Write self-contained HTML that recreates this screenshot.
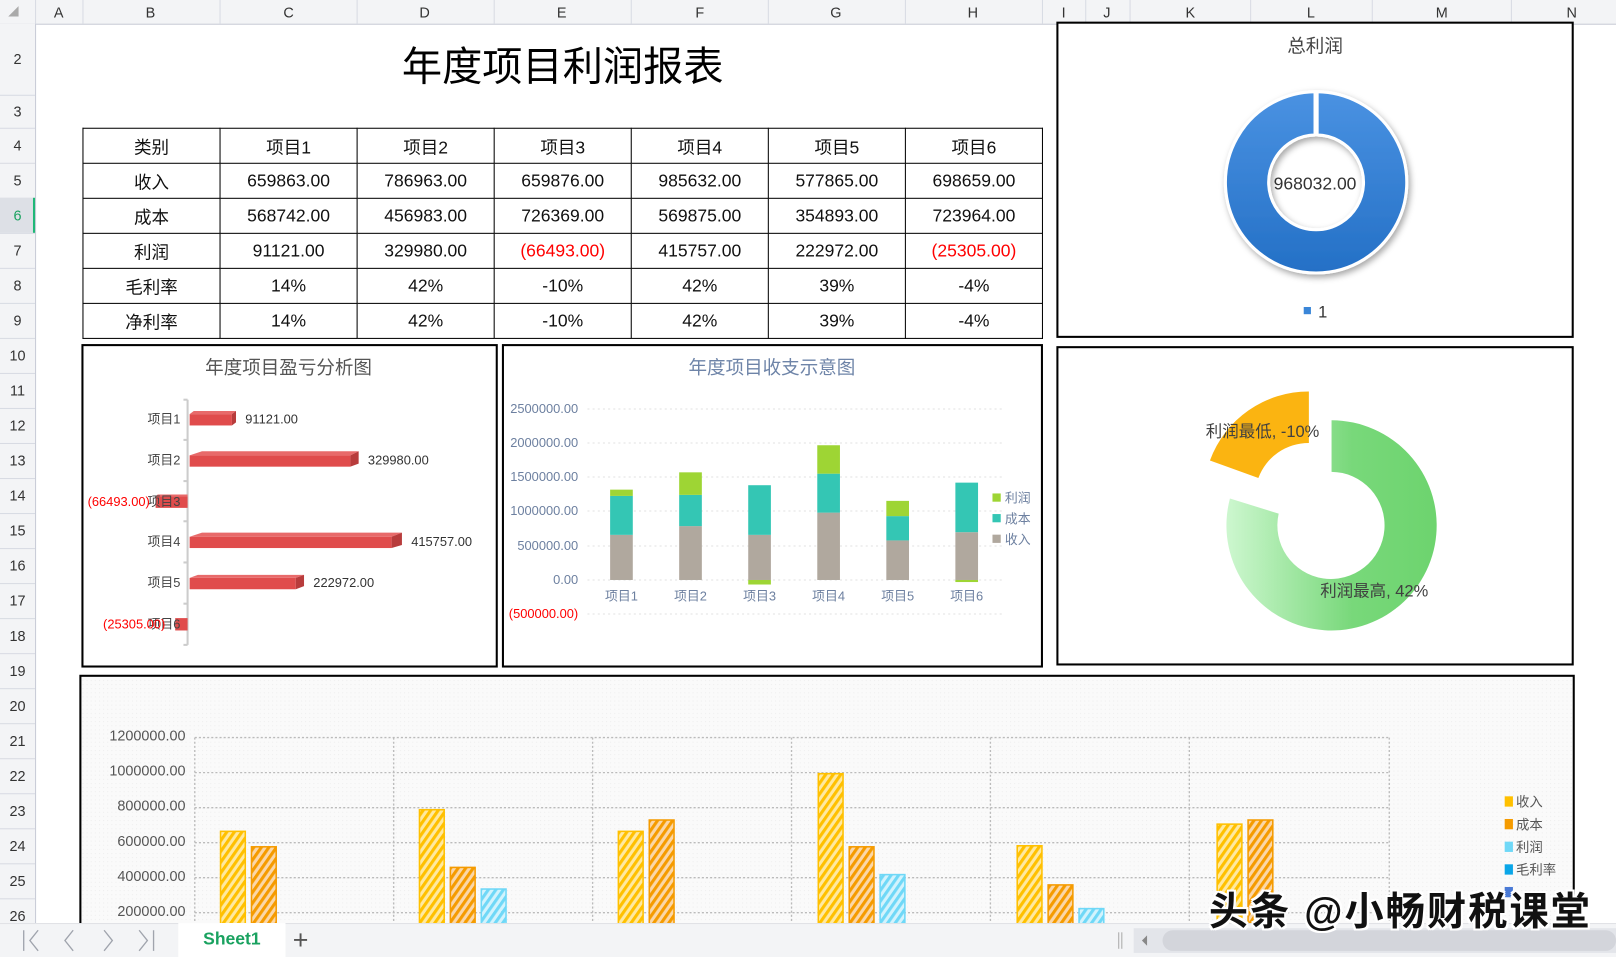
<!DOCTYPE html>
<html><head><meta charset="utf-8"><style>
html,body{margin:0;padding:0;width:1616px;height:956px;overflow:hidden;background:#fff}
#w{position:absolute;left:0;top:0;width:1568px;height:928px;transform:scale(1.03061,1.03017);transform-origin:0 0;font-family:"Liberation Sans","Noto Sans CJK SC",sans-serif}
.ch{position:absolute;top:0;height:23px;background:#f3f4f6;border-bottom:1px solid #c8cbd6;left:0;width:1568px}
.ch span{position:absolute;top:4px;font-size:14px;color:#333;transform:translateX(-50%)}
.ch i{position:absolute;top:0;width:1px;height:23px;background:#d8dbe3}
.rh{position:absolute;left:0;top:23px;width:34px;height:873px;background:#f3f4f6;border-right:1px solid #c8cbd6}
.rh span{position:absolute;left:0;width:34px;text-align:center;font-size:14px;color:#333;transform:translateY(-50%)}
.rh i{position:absolute;left:0;width:34px;height:1px;background:#d8dbe3}
table{position:absolute;left:80px;top:124px;border-collapse:collapse}
td{border:1px solid #000;width:132px;height:33px;padding:0;text-align:center;font-size:17px;color:#111}
.r{color:#f00}
.tab{position:absolute;left:0;top:896px;width:1568px;height:32px;background:#f3f4f6;border-top:1px solid #e0e2e6}
</style></head><body><div id="w">
<div class="ch">
<i style="left:34px"></i><i style="left:80px"></i><i style="left:213px"></i><i style="left:346px"></i><i style="left:479px"></i><i style="left:612px"></i><i style="left:745px"></i><i style="left:878px"></i><i style="left:1011px"></i><i style="left:1053px"></i><i style="left:1096px"></i><i style="left:1213px"></i><i style="left:1331px"></i><i style="left:1466px"></i>
<span style="left:57px">A</span><span style="left:146px">B</span><span style="left:280px">C</span><span style="left:412px">D</span><span style="left:545px">E</span><span style="left:679px">F</span><span style="left:811px">G</span><span style="left:944px">H</span><span style="left:1032px">I</span><span style="left:1074px">J</span><span style="left:1155px">K</span><span style="left:1272px">L</span><span style="left:1399px">M</span><span style="left:1525px">N</span>
</div>
<div style="position:absolute;left:8px;top:6px;width:0;height:0;border-left:10px solid transparent;border-bottom:10px solid #aaa"></div>
<div class="rh">
<i style="top:69px"></i><i style="top:101px"></i><i style="top:135px"></i><i style="top:169px"></i><i style="top:203px"></i><i style="top:237px"></i><i style="top:271px"></i><i style="top:305px"></i><i style="top:339px"></i><i style="top:373px"></i><i style="top:407px"></i><i style="top:441px"></i><i style="top:475px"></i><i style="top:509px"></i><i style="top:543px"></i><i style="top:577px"></i><i style="top:611px"></i><i style="top:645px"></i><i style="top:679px"></i><i style="top:713px"></i><i style="top:747px"></i><i style="top:781px"></i><i style="top:815px"></i><i style="top:849px"></i>
<div style="position:absolute;left:0;top:169px;width:32px;height:34px;background:#dde0e6;border-right:2px solid #1fb877"></div>
<span style="top:34px">2</span><span style="top:85px">3</span><span style="top:118px">4</span><span style="top:152px">5</span><span style="top:186px;color:#1aa260">6</span><span style="top:220px">7</span><span style="top:254px">8</span><span style="top:288px">9</span><span style="top:322px">10</span><span style="top:356px">11</span><span style="top:390px">12</span><span style="top:424px">13</span><span style="top:458px">14</span><span style="top:492px">15</span><span style="top:526px">16</span><span style="top:560px">17</span><span style="top:594px">18</span><span style="top:628px">19</span><span style="top:662px">20</span><span style="top:696px">21</span><span style="top:730px">22</span><span style="top:764px">23</span><span style="top:798px">24</span><span style="top:832px">25</span><span style="top:866px">26</span>
</div>
<div style="position:absolute;left:300px;top:34px;width:492px;text-align:center;font-size:39px;color:#000">年度项目利润报表</div>
<table>
<tr><td>类别</td><td>项目1</td><td>项目2</td><td>项目3</td><td>项目4</td><td>项目5</td><td>项目6</td></tr>
<tr><td>收入</td><td>659863.00</td><td>786963.00</td><td>659876.00</td><td>985632.00</td><td>577865.00</td><td>698659.00</td></tr>
<tr><td>成本</td><td>568742.00</td><td>456983.00</td><td>726369.00</td><td>569875.00</td><td>354893.00</td><td>723964.00</td></tr>
<tr><td>利润</td><td>91121.00</td><td>329980.00</td><td class="r">(66493.00)</td><td>415757.00</td><td>222972.00</td><td class="r">(25305.00)</td></tr>
<tr><td>毛利率</td><td>14%</td><td>42%</td><td>-10%</td><td>42%</td><td>39%</td><td>-4%</td></tr>
<tr><td>净利率</td><td>14%</td><td>42%</td><td>-10%</td><td>42%</td><td>39%</td><td>-4%</td></tr>
</table>
<svg style="position:absolute;left:0;top:0" width="1568" height="928" font-family="Liberation Sans,Noto Sans CJK SC,sans-serif">
<defs>
<linearGradient id="bl" x1="0" y1="0" x2="0" y2="1"><stop offset="0" stop-color="#4a92e2"/><stop offset="1" stop-color="#2470c6"/></linearGradient>
<linearGradient id="gr" x1="0" y1="0" x2="1" y2="0"><stop offset="0" stop-color="#cdf7cf"/><stop offset="0.6" stop-color="#78d87a"/><stop offset="1" stop-color="#6dd46e"/></linearGradient>
<filter id="sh" x="-20%" y="-20%" width="140%" height="140%"><feDropShadow dx="2" dy="3" stdDeviation="3" flood-color="#000" flood-opacity="0.35"/></filter>
<pattern id="pY" width="6" height="6" patternUnits="userSpaceOnUse" patternTransform="rotate(35)"><rect width="6" height="6" fill="#ffe9a0"/><rect width="3" height="6" fill="#ffc000"/></pattern>
<pattern id="pO" width="6" height="6" patternUnits="userSpaceOnUse" patternTransform="rotate(35)"><rect width="6" height="6" fill="#fbd7a8"/><rect width="3" height="6" fill="#f59b00"/></pattern>
<pattern id="pB" width="6" height="6" patternUnits="userSpaceOnUse" patternTransform="rotate(35)"><rect width="6" height="6" fill="#d2f3fd"/><rect width="3" height="6" fill="#6fd8f7"/></pattern>
<pattern id="bg" width="4" height="4" patternUnits="userSpaceOnUse"><rect width="4" height="4" fill="#fafafa"/><rect width="1" height="1" fill="#eeeeee"/></pattern>
</defs>
<rect x="1026" y="22" width="500" height="305" fill="#fff" stroke="#000" stroke-width="2"/>
<text x="1276" y="51" font-size="18" fill="#444" text-anchor="middle">总利润</text>
<g filter="url(#sh)"><path d="M1278 89 A88 88 0 1 1 1276 89 L1276 131 A46 46 0 1 0 1278 131 Z" fill="url(#bl)" stroke="#fff" stroke-width="3"/></g>
<text x="1276" y="184" font-size="17" fill="#333" text-anchor="middle">968032.00</text>
<rect x="1265" y="298" width="7" height="7" fill="#3a86d8"/>
<text x="1279" y="308" font-size="16" fill="#333">1</text>
<rect x="80" y="335" width="402" height="312" fill="#fff" stroke="#000" stroke-width="2"/>
<text x="280" y="363" font-size="18" fill="#555" text-anchor="middle">年度项目盈亏分析图</text>
<line x1="182" y1="388" x2="182" y2="626" stroke="#ccc" stroke-width="2"/>
<g stroke="#ccc" stroke-width="2"><line x1="178" y1="388" x2="182" y2="388"/><line x1="178" y1="427" x2="182" y2="427"/><line x1="178" y1="467" x2="182" y2="467"/><line x1="178" y1="506" x2="182" y2="506"/><line x1="178" y1="546" x2="182" y2="546"/><line x1="178" y1="586" x2="182" y2="586"/><line x1="178" y1="626" x2="182" y2="626"/></g>
<g>
<rect x="184" y="402" width="41" height="11" fill="#e04c4c"/><polygon points="184,402 188,399 229,399 225,402" fill="#e86a6a"/><polygon points="225,402 229,399 229,410 225,413" fill="#b83c3c"/>
<rect x="184" y="442" width="156" height="11" fill="#e04c4c"/><polygon points="184,442 196,438 348,438 340,442" fill="#e86a6a"/><polygon points="340,442 348,438 348,450 340,453" fill="#b83c3c"/>
<rect x="151" y="482" width="31" height="11" fill="#e04c4c"/><polygon points="151,482 153,480 182,480 182,482" fill="#e86a6a"/>
<rect x="184" y="521" width="196" height="11" fill="#e04c4c"/><polygon points="184,521 196,517 390,517 380,521" fill="#e86a6a"/><polygon points="380,521 390,517 390,529 380,532" fill="#b83c3c"/>
<rect x="184" y="561" width="103" height="11" fill="#e04c4c"/><polygon points="184,561 192,558 295,558 287,561" fill="#e86a6a"/><polygon points="287,561 295,558 295,569 287,572" fill="#b83c3c"/>
<rect x="170" y="600" width="12" height="12" fill="#e04c4c"/>
</g>
<g font-size="12.5" fill="#444" text-anchor="end"><text x="175" y="411">项目1</text><text x="175" y="451">项目2</text><text x="175" y="491">项目3</text><text x="175" y="530">项目4</text><text x="175" y="570">项目5</text><text x="175" y="610">项目6</text></g>
<g font-size="12.5" fill="#333"><text x="238" y="411">91121.00</text><text x="357" y="451">329980.00</text><text x="399" y="530">415757.00</text><text x="304" y="570">222972.00</text></g>
<g font-size="12.5" fill="#f00"><text x="85" y="491">(66493.00)</text><text x="100" y="610">(25305.00)</text></g>
<rect x="488" y="335" width="523" height="312" fill="#fff" stroke="#000" stroke-width="2"/>
<text x="749" y="363" font-size="18" fill="#6e84a8" text-anchor="middle">年度项目收支示意图</text>
<g stroke="#e2e2e2" stroke-dasharray="2,3"><line x1="570" y1="397" x2="972" y2="397"/><line x1="570" y1="430" x2="972" y2="430"/><line x1="570" y1="463" x2="972" y2="463"/><line x1="570" y1="496" x2="972" y2="496"/><line x1="570" y1="530" x2="972" y2="530"/><line x1="570" y1="563" x2="972" y2="563"/><line x1="570" y1="596" x2="972" y2="596"/></g>
<g font-size="12.5" fill="#6d80a0" text-anchor="end"><text x="561" y="401">2500000.00</text><text x="561" y="434">2000000.00</text><text x="561" y="467">1500000.00</text><text x="561" y="500">1000000.00</text><text x="561" y="534">500000.00</text><text x="561" y="567">0.00</text><text x="561" y="600" fill="#f00">(500000.00)</text></g>
<g>
<rect x="592" y="519.2" width="22" height="43.8" fill="#b0a89e"/><rect x="592" y="481.4" width="22" height="37.8" fill="#34c6b4"/><rect x="592" y="475.3" width="22" height="6.1" fill="#9ed534"/>
<rect x="659" y="510.7" width="22" height="52.3" fill="#b0a89e"/><rect x="659" y="480.4" width="22" height="30.3" fill="#34c6b4"/><rect x="659" y="458.5" width="22" height="21.9" fill="#9ed534"/>
<rect x="726" y="519.2" width="22" height="43.8" fill="#b0a89e"/><rect x="726" y="471" width="22" height="48.2" fill="#34c6b4"/><rect x="726" y="563" width="22" height="4.4" fill="#9ed534"/>
<rect x="793" y="497.6" width="22" height="65.4" fill="#b0a89e"/><rect x="793" y="459.8" width="22" height="37.8" fill="#34c6b4"/><rect x="793" y="432.2" width="22" height="27.6" fill="#9ed534"/>
<rect x="860" y="524.6" width="22" height="38.4" fill="#b0a89e"/><rect x="860" y="501" width="22" height="23.6" fill="#34c6b4"/><rect x="860" y="486.2" width="22" height="14.8" fill="#9ed534"/>
<rect x="927" y="516.6" width="22" height="46.4" fill="#b0a89e"/><rect x="927" y="468.5" width="22" height="48.1" fill="#34c6b4"/><rect x="927" y="563" width="22" height="2" fill="#9ed534"/>
</g>
<g font-size="12.5" fill="#6d80a0" text-anchor="middle"><text x="603" y="583">项目1</text><text x="670" y="583">项目2</text><text x="737" y="583">项目3</text><text x="804" y="583">项目4</text><text x="871" y="583">项目5</text><text x="938" y="583">项目6</text></g>
<rect x="963" y="479" width="8" height="8" fill="#9ed534"/><rect x="963" y="499" width="8" height="8" fill="#34c6b4"/><rect x="963" y="519" width="8" height="8" fill="#b0a89e"/>
<g font-size="12.5" fill="#6d80a0"><text x="975" y="488">利润</text><text x="975" y="508">成本</text><text x="975" y="528">收入</text></g>
<rect x="1026" y="337" width="500" height="308" fill="#fff" stroke="#000" stroke-width="2"/>
<path d="M1292 408 A102 102 0 1 1 1193.4 483.9 L1240.7 498.6 A52 52 0 1 0 1292 458 Z" fill="url(#gr)"/>
<path d="M1270 380 L1270 430 A52 52 0 0 0 1221 464 L1174 447 A102 102 0 0 1 1270 380 Z" fill="#fbb411"/>
<g font-size="16" fill="#404040"><text x="1170" y="424">利润最低, -10%</text><text x="1281" y="579">利润最高, 42%</text></g>
<rect x="78" y="656" width="1449" height="260" fill="url(#bg)" stroke="#000" stroke-width="2"/>
<g stroke="#bbb" stroke-dasharray="2,2" stroke-width="1.3">
<line x1="189" y1="716" x2="1348" y2="716"/><line x1="189" y1="750" x2="1348" y2="750"/><line x1="189" y1="784" x2="1348" y2="784"/><line x1="189" y1="818" x2="1348" y2="818"/><line x1="189" y1="852" x2="1348" y2="852"/><line x1="189" y1="886" x2="1348" y2="886"/>
<line x1="189" y1="716" x2="189" y2="900"/><line x1="382" y1="716" x2="382" y2="900"/><line x1="575" y1="716" x2="575" y2="900"/><line x1="768" y1="716" x2="768" y2="900"/><line x1="961" y1="716" x2="961" y2="900"/><line x1="1154" y1="716" x2="1154" y2="900"/><line x1="1348" y1="716" x2="1348" y2="900"/>
</g>
<g font-size="14" fill="#555" text-anchor="end"><text x="180" y="719">1200000.00</text><text x="180" y="753">1000000.00</text><text x="180" y="787">800000.00</text><text x="180" y="821">600000.00</text><text x="180" y="855">400000.00</text><text x="180" y="889">200000.00</text></g>
<g stroke-width="1.5">
<rect x="214" y="807" width="24" height="111" fill="url(#pY)" stroke="#ffc000"/><rect x="244" y="822" width="24" height="96" fill="url(#pO)" stroke="#f59b00"/><rect x="274" y="903" width="24" height="15" fill="url(#pB)" stroke="#6fd8f7"/>
<rect x="407" y="786" width="24" height="132" fill="url(#pY)" stroke="#ffc000"/><rect x="437" y="842" width="24" height="76" fill="url(#pO)" stroke="#f59b00"/><rect x="467" y="863" width="24" height="55" fill="url(#pB)" stroke="#6fd8f7"/>
<rect x="600" y="807" width="24" height="111" fill="url(#pY)" stroke="#ffc000"/><rect x="630" y="796" width="24" height="122" fill="url(#pO)" stroke="#f59b00"/>
<rect x="794" y="751" width="24" height="167" fill="url(#pY)" stroke="#ffc000"/><rect x="824" y="822" width="24" height="96" fill="url(#pO)" stroke="#f59b00"/><rect x="854" y="849" width="24" height="69" fill="url(#pB)" stroke="#6fd8f7"/>
<rect x="987" y="821" width="24" height="97" fill="url(#pY)" stroke="#ffc000"/><rect x="1017" y="859" width="24" height="59" fill="url(#pO)" stroke="#f59b00"/><rect x="1047" y="882" width="24" height="36" fill="url(#pB)" stroke="#6fd8f7"/>
<rect x="1181" y="800" width="24" height="118" fill="url(#pY)" stroke="#ffc000"/><rect x="1211" y="796" width="24" height="122" fill="url(#pO)" stroke="#f59b00"/>
</g>
<rect x="1460" y="773" width="8" height="10" fill="#ffc000"/><rect x="1460" y="795" width="8" height="10" fill="#f59b00"/><rect x="1460" y="817" width="8" height="10" fill="#6fd8f7"/><rect x="1460" y="839" width="8" height="10" fill="#0aa6e8"/><rect x="1460" y="861" width="8" height="10" fill="#4a7ad6"/>
<g font-size="13" fill="#555"><text x="1471" y="783">收入</text><text x="1471" y="805">成本</text><text x="1471" y="827">利润</text><text x="1471" y="849">毛利率</text></g>
</svg>
<div class="tab">
<svg style="position:absolute;left:0;top:0" width="170" height="32" fill="none" stroke="#a0a4ad" stroke-width="1.3">
<line x1="23" y1="6" x2="23" y2="26"/><polyline points="37,6 29,16 37,26"/>
<polyline points="71,6 63,16 71,26"/>
<polyline points="101,6 109,16 101,26"/>
<polyline points="135,6 143,16 135,26"/><line x1="149" y1="6" x2="149" y2="26"/>
</svg>
<div style="position:absolute;left:173px;top:-1px;width:104px;height:33px;background:#fff;text-align:center;line-height:32px;font-size:17px;font-weight:bold;color:#1aa260">Sheet1</div>
<div style="position:absolute;left:284px;top:0px;font-size:26px;color:#555;line-height:30px">+</div>
<div style="position:absolute;left:1085px;top:8px;width:1px;height:16px;background:#aaa;box-shadow:3px 0 0 #aaa"></div>
<div style="position:absolute;left:1100px;top:4px;width:468px;height:24px;background:#e3e5ea"></div>
<div style="position:absolute;left:1128px;top:6px;width:440px;height:20px;background:#d3d5db;border-radius:10px"></div>
<div style="position:absolute;left:1108px;top:11px;width:0;height:0;border-top:5px solid transparent;border-bottom:5px solid transparent;border-right:5px solid #888"></div>
</div>
<div style="position:absolute;left:1173px;top:854px;font-size:38px;letter-spacing:2px;font-weight:bold;color:#111;white-space:nowrap;text-shadow:-2px 0 #fff,2px 0 #fff,0 -2px #fff,0 2px #fff,2px 2px #fff,-2px -2px #fff,2px -2px #fff,-2px 2px #fff">头条 @小畅财税课堂</div>
</div></body></html>
